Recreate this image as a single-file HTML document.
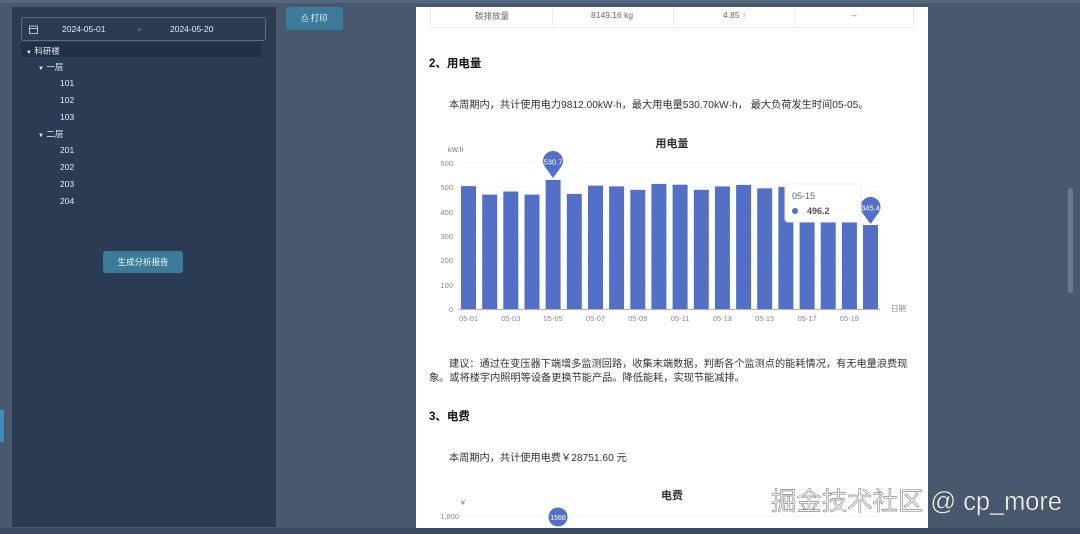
<!DOCTYPE html>
<html><head><meta charset="utf-8"><style>
*{margin:0;padding:0;box-sizing:border-box}
body{width:1080px;height:534px;overflow:hidden;background:#48586f;font-family:"Liberation Sans","Noto Sans CJK SC",sans-serif;position:relative}
.abs{position:absolute}
.panel{left:12px;top:7px;width:264px;height:520px;background:#2b3b53}
.date{left:21px;top:17px;width:245px;height:24px;border:1px solid #5d6d84;border-radius:3px;color:#e6ebf2;font-size:8.5px}
.tree{color:#e6ebf2;font-size:8.5px}
.btn{background:#3d7c98;color:#eef4f8;font-size:8.5px;border-radius:3px;text-align:center}
.paper{left:416px;top:7px;width:512px;height:521px;background:#fff;color:#222}
.t{font-size:10.2px;color:#333;white-space:nowrap}
</style></head><body>
<div class="abs" style="left:0;top:0;width:1080px;height:3px;background:#56667d"></div>
<div class="abs panel"></div>
<div class="abs" style="left:0;top:410px;width:4px;height:32px;background:#3d8fc0"></div>
<div class="abs date">
 <svg class="abs" style="left:7px;top:7px" width="9" height="9" viewBox="0 0 9 9"><rect x="0.5" y="1" width="8" height="7.5" fill="none" stroke="#c5cdd8" stroke-width="0.9"/><line x1="0.5" y1="3.5" x2="8.5" y2="3.5" stroke="#c5cdd8" stroke-width="0.9"/></svg>
 <span class="abs" style="left:40px;top:6px">2024-05-01</span>
 <span class="abs" style="left:116px;top:6px">-</span>
 <span class="abs" style="left:148px;top:6px">2024-05-20</span>
</div>
<div class="abs" style="left:21px;top:42px;width:240px;height:15px;background:#213047"></div>
<div class="abs tree" style="left:26px;top:45px"><span style="font-size:6px">▼</span> 科研楼</div>
<div class="abs tree" style="left:38px;top:61px"><span style="font-size:6px">▼</span> 一层</div>
<div class="abs tree" style="left:60px;top:78px">101</div>
<div class="abs tree" style="left:60px;top:95px">102</div>
<div class="abs tree" style="left:60px;top:112px">103</div>
<div class="abs tree" style="left:38px;top:128px"><span style="font-size:6px">▼</span> 二层</div>
<div class="abs tree" style="left:60px;top:145px">201</div>
<div class="abs tree" style="left:60px;top:162px">202</div>
<div class="abs tree" style="left:60px;top:179px">203</div>
<div class="abs tree" style="left:60px;top:196px">204</div>
<div class="abs btn" style="left:103px;top:251px;width:80px;height:22px;line-height:22px">生成分析报告</div>
<div class="abs btn" style="left:286px;top:7px;width:57px;height:23px;line-height:23px">⎙ 打印</div>

<div class="abs paper">
 <div class="abs" style="left:14px;top:0;width:484px;height:21px;border:1px solid #eee;border-top:none;font-size:8.5px;color:#666">
  <span class="abs" style="left:44px;top:3px">碳排放量</span>
  <span class="abs" style="left:160px;top:3px">8149.16 kg</span>
  <span class="abs" style="left:292px;top:3px">4.85 <span style="color:#e0554a">↑</span></span>
  <span class="abs" style="left:420px;top:3px">--</span>
  <div class="abs" style="left:121px;top:0;width:1px;height:21px;background:#eee"></div>
  <div class="abs" style="left:242px;top:0;width:1px;height:21px;background:#eee"></div>
  <div class="abs" style="left:363px;top:0;width:1px;height:21px;background:#eee"></div>
 </div>
 <div class="abs" style="left:13px;top:48px;font-size:11.5px;font-weight:bold;color:#111">2、用电量</div>
 <div class="abs t" style="left:33px;top:89px">本周期内，共计使用电力9812.00kW·h，最大用电量530.70kW·h， 最大负荷发生时间05-05。</div>
 <div class="abs t" style="left:33px;top:348px">建议：通过在变压器下端增多监测回路，收集末端数据，判断各个监测点的能耗情况，有无电量浪费现</div>
 <div class="abs t" style="left:13px;top:362px">象。或将楼宇内照明等设备更换节能产品。降低能耗，实现节能减排。</div>
 <div class="abs" style="left:13px;top:401px;font-size:11.5px;font-weight:bold;color:#111">3、电费</div>
 <div class="abs t" style="left:33px;top:442px">本周期内，共计使用电费￥28751.60 元</div>
</div>

<svg class="abs" style="left:0;top:0" width="1080" height="534" font-family="Liberation Sans,Noto Sans CJK SC,sans-serif">
 <text x="672" y="147" font-size="11" font-weight="bold" fill="#333" text-anchor="middle">用电量</text>
 <text x="448" y="152" font-size="7" fill="#777">kW.h</text>
 <g stroke="#eef0f4" stroke-width="0.8">
  <line x1="458" y1="163" x2="880" y2="163"/><line x1="458" y1="187" x2="880" y2="187"/><line x1="458" y1="212" x2="880" y2="212"/><line x1="458" y1="236" x2="880" y2="236"/><line x1="458" y1="260" x2="880" y2="260"/><line x1="458" y1="285" x2="880" y2="285"/>
 </g>
 <line x1="458" y1="309.5" x2="880" y2="309.5" stroke="#999" stroke-width="0.8"/>
 <g font-size="7.5" fill="#888" text-anchor="end">
  <text x="453" y="166">600</text><text x="453" y="190">500</text><text x="453" y="215">400</text><text x="453" y="239">300</text><text x="453" y="263">200</text><text x="453" y="288">100</text><text x="453" y="312">0</text>
 </g>
 <text x="891" y="311" font-size="7.5" fill="#888">日期</text>
 <g fill="#5470c6">
  <rect x="461" y="186.1" width="15" height="122.9"/>
  <rect x="482.2" y="194.6" width="15" height="114.4"/>
  <rect x="503.3" y="191.5" width="15" height="117.5"/>
  <rect x="524.5" y="194.6" width="15" height="114.4"/>
  <rect x="545.6" y="179.9" width="15" height="129.1"/>
  <rect x="566.8" y="193.9" width="15" height="115.1"/>
  <rect x="588" y="185.6" width="15" height="123.4"/>
  <rect x="609.1" y="186.4" width="15" height="122.6"/>
  <rect x="630.3" y="189.8" width="15" height="119.2"/>
  <rect x="651.4" y="183.9" width="15" height="125.1"/>
  <rect x="672.6" y="184.7" width="15" height="124.3"/>
  <rect x="693.8" y="189.8" width="15" height="119.2"/>
  <rect x="714.9" y="186.4" width="15" height="122.6"/>
  <rect x="736.1" y="184.9" width="15" height="124.1"/>
  <rect x="757.2" y="188.3" width="15" height="120.7"/>
  <rect x="778.4" y="186.9" width="15" height="122.1"/>
  <rect x="799.6" y="189.8" width="15" height="119.2"/>
  <rect x="820.7" y="187.3" width="15" height="121.7"/>
  <rect x="841.9" y="186.1" width="15" height="122.9"/>
  <rect x="863" y="225" width="15" height="84"/>
  <path d="M553 178 L545 167 A10 10 0 1 1 561 167 Z"/>
  <path d="M870.5 224 L862.5 213 A10 10 0 1 1 878.5 213 Z"/>
 </g>
 <text x="553" y="164.5" font-size="7.5" fill="#fff" text-anchor="middle">530.7</text>
 <text x="870.5" y="210.5" font-size="7.5" fill="#fff" text-anchor="middle">345.4</text>
 <g font-size="7.5" fill="#888" text-anchor="middle">
  <text x="468.5" y="321">05-01</text><text x="510.8" y="321">05-03</text><text x="553.1" y="321">05-05</text><text x="595.5" y="321">05-07</text><text x="637.8" y="321">05-09</text><text x="680.1" y="321">05-11</text><text x="722.4" y="321">05-13</text><text x="764.7" y="321">05-15</text><text x="807.1" y="321">05-17</text><text x="849.4" y="321">05-19</text>
 </g>
 <rect x="785" y="184" width="76" height="38" rx="3" fill="#fff" stroke="#eee"/>
 <text x="792" y="199" font-size="9" fill="#666">05-15</text>
 <circle cx="795" cy="211" r="3" fill="#5470c6"/>
 <text x="807" y="214" font-size="9" font-weight="bold" fill="#555">496.2</text>
 <text x="672" y="499" font-size="11" font-weight="bold" fill="#333" text-anchor="middle">电费</text>
 <text x="461" y="505" font-size="7" fill="#777">¥</text>
 <text x="459" y="519" font-size="7.5" fill="#888" text-anchor="end">1,800</text>
 <line x1="463" y1="516" x2="880" y2="516" stroke="#eef0f4" stroke-width="0.8"/>
 <circle cx="558" cy="517" r="9.5" fill="#5470c6"/>
 <text x="558" y="520" font-size="7" fill="#fff" text-anchor="middle">1568</text>
 <rect x="0" y="528" width="1080" height="6" fill="#3b4a60"/>
 <rect x="1068" y="188" width="5" height="105" rx="2.5" fill="#6a7a90"/>
 <text x="771" y="510" font-size="25.5" fill="#f2f2f2" stroke="#555" stroke-width="0.4" textLength="291" lengthAdjust="spacingAndGlyphs">掘金技术社区 @ cp_more</text>
</svg>
</body></html>
